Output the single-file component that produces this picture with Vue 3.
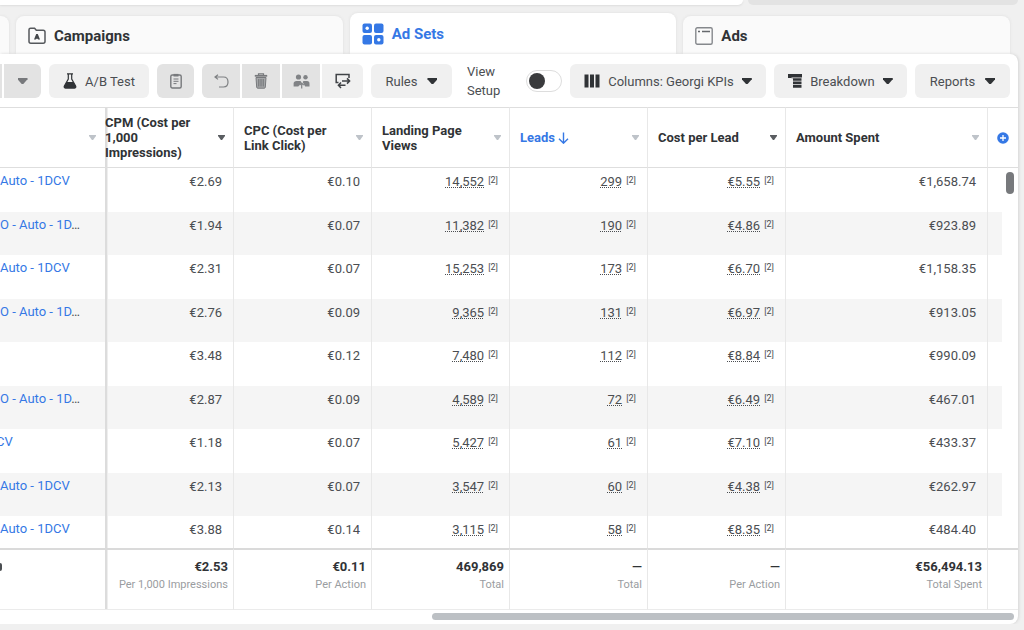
<script setup>
import { ref } from 'vue'

const viewSetup = ref(false)

const columns = [
  { key: 'name', label: '', muted: true },
  { key: 'cpm', label: 'CPM (Cost per 1,000 Impressions)', total: '€2.53', note: 'Per 1,000 Impressions' },
  { key: 'cpc', label: 'CPC (Cost per Link Click)', total: '€0.11', note: 'Per Action', muted: true },
  { key: 'views', label: 'Landing Page Views', total: '469,869', note: 'Total', muted: true, attributed: true },
  { key: 'leads', label: 'Leads', total: '—', note: 'Total', muted: true, attributed: true, sorted: true },
  { key: 'cpl', label: 'Cost per Lead', total: '—', note: 'Per Action', attributed: true },
  { key: 'spent', label: 'Amount Spent', total: '€56,494.13', note: 'Total Spent', muted: true },
]
const metrics = columns.slice(1)

const rows = [
  { name: 'Auto - 1DCV', cpm: '€2.69', cpc: '€0.10', views: '14,552', leads: '299', cpl: '€5.55', spent: '€1,658.74' },
  { name: 'O - Auto - 1D', cut: true, cpm: '€1.94', cpc: '€0.07', views: '11,382', leads: '190', cpl: '€4.86', spent: '€923.89' },
  { name: 'Auto - 1DCV', cpm: '€2.31', cpc: '€0.07', views: '15,253', leads: '173', cpl: '€6.70', spent: '€1,158.35' },
  { name: 'O - Auto - 1D', cut: true, cpm: '€2.76', cpc: '€0.09', views: '9,365', leads: '131', cpl: '€6.97', spent: '€913.05' },
  { name: '', cpm: '€3.48', cpc: '€0.12', views: '7,480', leads: '112', cpl: '€8.84', spent: '€990.09' },
  { name: 'O - Auto - 1D', cut: true, cpm: '€2.87', cpc: '€0.09', views: '4,589', leads: '72', cpl: '€6.49', spent: '€467.01' },
  { name: 'CV', tail: true, cpm: '€1.18', cpc: '€0.07', views: '5,427', leads: '61', cpl: '€7.10', spent: '€433.37' },
  { name: 'Auto - 1DCV', cpm: '€2.13', cpc: '€0.07', views: '3,547', leads: '60', cpl: '€4.38', spent: '€262.97' },
  { name: 'Auto - 1DCV', cpm: '€3.88', cpc: '€0.14', views: '3,115', leads: '58', cpl: '€8.35', spent: '€484.40' },
]
</script>

<template>
  <div class="page">
    <div class="filters">
      <div class="search"></div>
      <div class="dates"></div>
    </div>

    <nav class="tabs">
      <div class="tab stub"></div>
      <a class="tab" href="#campaigns">
        <svg width="18" height="18" viewBox="0 0 18 18" fill="none">
          <path d="M1 14.5V2.8Q1 1.2 2.6 1.2H6.6L8.3 3.2H15.2Q17 3.2 17 5V14.5Q17 16.2 15.2 16.2H2.8Q1 16.2 1 14.5Z" stroke="#55585c" stroke-width="1.5" />
          <path d="M8.2 7H9.8L12 12.4H10.3L9 11.4L7.7 12.4H6Z" fill="#44474b" />
        </svg>
        Campaigns
      </a>
      <a class="tab active" href="#adsets" aria-current="page">
        <svg width="22" height="22" viewBox="0 0 22 22">
          <g fill="#3578e5">
            <rect x="0.5" y="0.5" width="9.5" height="9.5" rx="2" />
            <rect x="12" y="0.5" width="9.5" height="9.5" rx="2" />
            <rect x="0.5" y="12" width="9.5" height="9.5" rx="2" />
            <rect x="12" y="12" width="9.5" height="9.5" rx="2" />
          </g>
          <circle cx="5.2" cy="5.2" r="1.7" fill="#fff" />
          <circle cx="16.8" cy="16.8" r="1.7" fill="#fff" />
        </svg>
        Ad Sets
      </a>
      <a class="tab" href="#ads">
        <svg width="18" height="18" viewBox="0 0 18 18" fill="none">
          <rect x="0.8" y="0.8" width="16.4" height="16.4" rx="1.5" stroke="#85888c" stroke-width="1.4" />
          <path d="M3 4.5H5M7 4.5H15" stroke="#66696d" stroke-width="1.3" />
        </svg>
        Ads
      </a>
    </nav>

    <main class="panel">
      <div class="toolbar">
        <div class="group">
          <span class="edge"></span>
          <button class="btn off small" aria-label="More edit options"><i class="caret"></i></button>
        </div>
        <button class="btn ab">
          <svg width="14" height="16" viewBox="0 0 14 16">
            <path d="M4 0.8H10M5.3 1V6L1.4 13Q0.7 15 2.6 15H11.4Q13.3 15 12.6 13L8.7 6V1" fill="none" stroke="#303336" stroke-width="1.2" />
            <path d="M3.6 9H10.4L13 13.4Q13.4 15.5 11.6 15.5H2.4Q0.6 15.5 1 13.4Z" fill="#303336" />
          </svg>
          A/B Test
        </button>
        <button class="btn off small" aria-label="Paste">
          <svg width="12" height="16" viewBox="0 0 12 16" fill="none" stroke="#77797c">
            <rect x="0.8" y="2" width="10.4" height="13" rx="1.5" stroke-width="1.4" />
            <path d="M3.5 2.2H8.5" stroke-width="2.6" />
            <path d="M3.5 6H8.5M3.5 8.3H8.5M3.5 10.6H6.5" stroke-width="1" />
          </svg>
        </button>
        <div class="group">
          <button class="btn off first" aria-label="Undo">
            <svg width="15" height="14" viewBox="0 0 15 14" fill="none" stroke="#7e8083" stroke-width="1.2">
              <path d="M4 0.8L1 3L4 5.4M1 3H9.5C12.5 3 14 5 14 8C14 11 12.5 13 9.5 13H5" />
            </svg>
          </button>
          <button class="btn off middle" aria-label="Delete">
            <svg width="14" height="16" viewBox="0 0 14 16" fill="none" stroke="#77797c">
              <path d="M4.5 2V0.8H9.5V2" stroke-width="1.2" />
              <path d="M0.8 2.8H13.2" stroke-width="1.8" />
              <path d="M2 4.5H12L11.3 14.2Q11.2 15.2 10.3 15.2H3.7Q2.8 15.2 2.7 14.2Z" fill="#a5a7a9" stroke-width="1" />
              <path d="M4.8 6V13.5M7 6V13.5M9.2 6V13.5" stroke="#6f7174" />
            </svg>
          </button>
          <button class="btn off middle" aria-label="Audiences">
            <svg width="17" height="15" viewBox="0 0 17 15" fill="#818386">
              <circle cx="5.5" cy="3" r="2.6" />
              <circle cx="12.5" cy="3.2" r="2.2" />
              <path d="M0.6 12.5V9.7Q0.6 7 3.6 7H7Q8.2 7 8.2 8.2V9L5.3 12.5Z" />
              <path d="M16.5 12.5V9.7Q16.5 7 14 7H11Q9.8 7 9.8 8.2L12.2 12.5Z" />
              <path d="M8.7 14.5V9M6.6 11.2L8.7 9L10.8 11.2" fill="none" stroke="#818386" stroke-width="1.2" />
            </svg>
          </button>
          <button class="btn last" aria-label="Export and import">
            <svg width="16" height="16" viewBox="0 0 16 16" fill="none" stroke="#404347" stroke-width="1.5">
              <path d="M3.5 9.5H1.2V1.5H14V5" />
              <path d="M7 8H14.5M12 5.4L14.6 8L12 10.6" />
              <path d="M10.5 12.3H3.5M6 9.6L3.4 12.3L6 15" />
            </svg>
          </button>
        </div>
        <button class="btn rules">Rules <i class="caret"></i></button>
        <div class="setup">
          <label for="view-setup">View<br>Setup</label>
          <input id="view-setup" v-model="viewSetup" type="checkbox" role="switch">
        </div>
        <button class="btn columns">
          <svg width="16" height="14" viewBox="0 0 16 14" fill="#303336"><path d="M0.5 0.5H4.5V13.5H0.5ZM6 0.5H10V13.5H6ZM11.5 0.5H15.5V13.5H11.5Z" /></svg>
          Columns: Georgi KPIs <i class="caret"></i>
        </button>
        <button class="btn breakdown">
          <svg width="14" height="14" viewBox="0 0 14 14" fill="#303336"><path d="M0 0H14V3.4H3.5V4.2H13.5V6.8H5V7.6H13.5V10.2H5V11H13.5V13.8H5V4H0Z" /></svg>
          Breakdown <i class="caret"></i>
        </button>
        <button class="btn reports">Reports <i class="caret"></i></button>
      </div>

      <table>
        <colgroup>
          <col>
          <col class="w-first">
          <col class="w-metric">
          <col class="w-metric">
          <col class="w-metric">
          <col class="w-metric">
          <col class="w-spent">
          <col class="w-gutter">
          <col class="w-scroll">
        </colgroup>
        <thead>
          <tr>
            <th v-for="c in columns" :key="c.key" :class="['c-' + c.key, { sorted: c.sorted }]">
              <div class="head">
                <span>{{ c.label }}<svg v-if="c.sorted" width="11" height="12" viewBox="0 0 11 12" fill="none" stroke="#3578e5" stroke-width="1.4"><path d="M5.5 0.5V11M1 6.8L5.5 11.2L10 6.8" /></svg></span>
                <i :class="['tick', { muted: c.muted }]"></i>
              </div>
            </th>
            <th colspan="2" class="add">
              <button aria-label="Add column">
                <svg width="12" height="12" viewBox="0 0 12 12"><circle cx="6" cy="6" r="5.8" fill="#3578e5" /><path d="M6 3V9M3 6H9" stroke="#fff" stroke-width="1.3" /></svg>
              </button>
            </th>
          </tr>
        </thead>
        <tbody>
          <tr v-for="(r, i) in rows" :key="i">
            <td class="c-name"><a v-if="r.name" href="#adset" :class="{ tail: r.tail }">{{ r.name }}</a><span v-if="r.cut">…</span></td>
            <td v-for="c in metrics" :key="c.key" :class="'c-' + c.key">
              <template v-if="c.attributed"><span class="dotted">{{ r[c.key] }}</span><span class="mark">[2]</span></template>
              <template v-else>{{ r[c.key] }}</template>
            </td>
            <td class="gutter"></td>
            <td v-if="i === 0" class="scroll" :rowspan="rows.length"><div class="thumb"></div></td>
          </tr>
        </tbody>
        <tfoot>
          <tr>
            <td class="c-name"><i class="info"></i></td>
            <td v-for="c in metrics" :key="c.key" :class="'c-' + c.key">
              <strong>{{ c.total }}</strong>
              <small>{{ c.note }}</small>
            </td>
            <td colspan="2"></td>
          </tr>
        </tfoot>
      </table>
      <div class="track"><div class="bar"></div></div>
    </main>
  </div>
</template>

<style>
body {
  background: #f0f0f0;
  overflow: hidden;
}
</style>

<style scoped>
.page {
  font-family: Roboto, "Liberation Sans", sans-serif;
  font-size: 13px;
  color: #4b4e52;
  padding-right: 6px;
}
.page * {
  box-sizing: border-box;
}
.filters {
  display: flex;
  gap: 5px;
  height: 5px;
}
.search {
  flex: 1;
  background: #fff;
  border-radius: 0 0 8px 0;
  box-shadow: 0 1px 2px #ddd;
}
.dates {
  width: 270px;
  background: #e3e3e3;
  border-radius: 0 0 6px 6px;
}
.tabs {
  display: flex;
  align-items: flex-end;
  gap: 7px;
  height: 49px;
  padding-right: 8px;
}
.tab {
  flex: 1;
  display: flex;
  align-items: center;
  gap: 8px;
  height: 38px;
  padding: 2px 0 0 12px;
  background: #fafafa;
  border-radius: 8px 8px 0 0;
  box-shadow: 0 0 3px #ddd;
  color: #303336;
  font-size: 15px;
  font-weight: 700;
  text-decoration: none;
}
.tab.stub {
  flex: 0 0 9px;
  padding: 0;
  border-radius: 0 8px 0 0;
}
.tab.active {
  height: 41px;
  padding-top: 0;
  background: #fff;
  color: #3578e5;
}
.panel {
  position: relative;
  background: #fff;
  border-radius: 0 8px 8px 0;
  box-shadow: 1px 0 3px #d5d5d5;
}
.toolbar {
  display: flex;
  gap: 8px;
  padding: 10px 8px 9px 0;
}
.group {
  display: flex;
  gap: 2px;
}
.btn {
  display: flex;
  align-items: center;
  justify-content: center;
  flex: none;
  height: 34px;
  padding: 0;
  border: 0;
  border-radius: 6px;
  background: #f0f0f0;
  color: #4b4e52;
  font: 13px Roboto, "Liberation Sans", sans-serif;
}
.btn.off {
  background: #e3e3e3;
}
.small {
  width: 37px;
}
.group .small {
  border-radius: 0 6px 6px 0;
}
.edge {
  width: 2px;
  background: #e3e3e3;
}
.first {
  width: 38px;
  border-radius: 6px 0 0 6px;
}
.middle {
  width: 38px;
  border-radius: 0;
}
.last {
  width: 41px;
  border-radius: 0 6px 6px 0;
}
.ab {
  width: 100px;
  gap: 8px;
}
.rules {
  width: 81px;
  gap: 10px;
}
.columns {
  width: 196px;
  gap: 8px;
}
.breakdown {
  width: 133px;
  gap: 8px;
}
.reports {
  width: 95px;
  gap: 10px;
}
.caret {
  width: 10px;
  height: 6px;
  background: #303336;
  clip-path: polygon(0 0, 100% 0, 100% 20%, 58% 100%, 42% 100%, 0 20%);
}
.off .caret {
  background: #77797c;
}
.setup {
  flex: 1;
  display: flex;
  align-items: center;
  justify-content: space-between;
  height: 34px;
  padding-left: 7px;
  line-height: 19px;
}
.setup input {
  appearance: none;
  display: flex;
  align-items: center;
  width: 36px;
  height: 22px;
  margin: 0;
  padding: 0 2px;
  border: 1px solid #ddd;
  border-radius: 11px;
  background: #fff;
}
.setup input::before {
  content: "";
  width: 16px;
  height: 16px;
  border-radius: 50%;
  background: #3a3b3d;
}
.setup input:checked {
  justify-content: flex-end;
}
table {
  width: 100%;
  table-layout: fixed;
  border-collapse: separate;
  border-spacing: 0;
}
.w-first { width: 129px; }
.w-metric { width: 138px; }
.w-spent { width: 202px; }
.w-gutter { width: 14px; }
.w-scroll { width: 16px; }
th,
td {
  padding: 0 11px 0 0;
  border-right: 1px solid #e8e8e8;
  text-align: right;
  vertical-align: top;
  white-space: nowrap;
}
th {
  height: 61px;
  padding: 0 8px 0 10px;
  border-top: 1px solid #dedede;
  border-bottom: 1px solid #dedede;
  vertical-align: middle;
  white-space: normal;
  color: #303336;
  line-height: 15px;
}
th.add,
.gutter,
.scroll,
tfoot td:last-child {
  border-right: 0;
}
.c-name {
  padding-left: 0;
  border-right: 0;
  text-align: left;
}
th.c-name {
  padding-right: 9px;
}
.c-cpm {
  background: linear-gradient(to right, #dcdcdc 2px, #eee 2px, #eee 3px, transparent 3px);
}
th.c-cpm {
  padding-left: 0;
}
.head {
  display: flex;
  align-items: center;
  justify-content: space-between;
  gap: 8px;
  text-align: left;
}
.head svg {
  margin-left: 3px;
  vertical-align: -2px;
}
th.sorted {
  color: #3578e5;
}
.tick {
  flex: none;
  width: 7px;
  height: 5px;
  background: #5a5d61;
  clip-path: polygon(0 0, 100% 0, 100% 20%, 58% 100%, 42% 100%, 0 20%);
}
.tick.muted {
  background: #bec3c9;
}
th.add {
  padding: 0 9px 0 0;
}
.add button {
  display: block;
  width: 12px;
  height: 12px;
  margin-left: auto;
  padding: 0;
  border: 0;
  background: none;
}
.add svg {
  display: block;
}
tbody td {
  padding-top: 6px;
  line-height: 16px;
}
tbody tr {
  height: 44px;
}
tbody tr:nth-child(even) {
  height: 43px;
}
tbody tr:nth-child(even) td {
  background-color: #f5f5f5;
}
tbody tr:last-child {
  height: 32px;
}
tbody .c-name {
  padding-top: 5px;
  overflow: hidden;
}
.c-name a {
  color: #3578e5;
  text-decoration: none;
}
.c-name .tail {
  margin-left: -4px;
}
.dotted {
  text-decoration: underline dotted 1px;
  text-underline-offset: 1px;
  text-decoration-skip-ink: none;
}
.mark {
  margin-left: 4px;
  font-size: 9px;
  line-height: 9px;
  vertical-align: 3px;
}
tbody .scroll {
  padding: 4px 4px 0 0;
}
.thumb {
  width: 8px;
  height: 22px;
  margin-left: auto;
  border-radius: 4px;
  background: #77797c;
}
tfoot td {
  height: 62px;
  padding: 8px 5px 0 0;
  border-top: 2px solid #dadada;
  border-bottom: 1px solid #ebebeb;
}
tfoot strong,
tfoot small {
  display: block;
  line-height: 18px;
}
tfoot strong {
  color: #303336;
}
tfoot small {
  color: #9a9da1;
  font-size: 11px;
}
.info {
  display: block;
  width: 2px;
  height: 8px;
  margin-top: 5px;
  border-radius: 0 4px 4px 0;
  background: #4b4e52;
}
.track {
  display: flex;
  justify-content: flex-end;
  padding: 3px 4px 4px 0;
}
.bar {
  flex: 0 0 57.4%;
  height: 7px;
  border-radius: 4px;
  background: #bcc0c4;
}
</style>
